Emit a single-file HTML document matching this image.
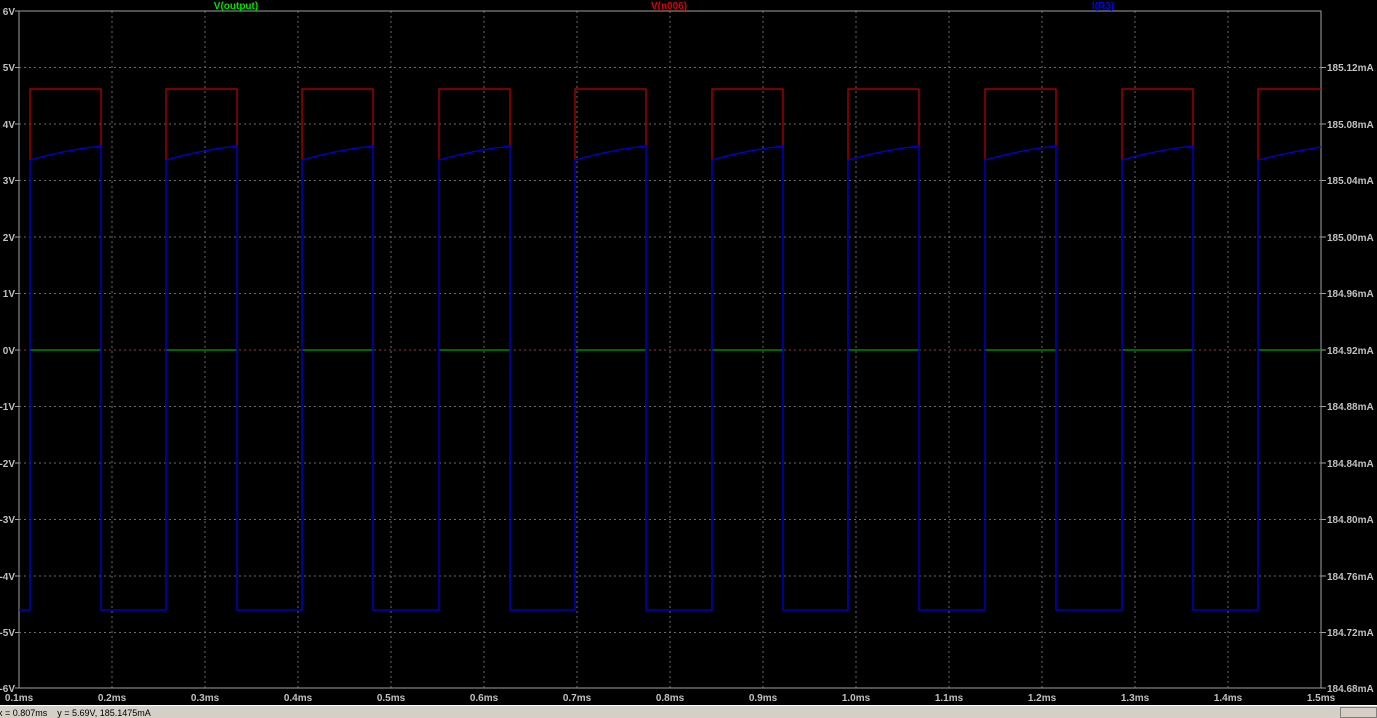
<!DOCTYPE html>
<html><head><meta charset="utf-8"><style>
html,body{margin:0;padding:0;background:#000;width:1377px;height:718px;overflow:hidden}
svg{display:block}
text{font-family:"Liberation Sans",sans-serif;font-size:10px;font-weight:bold}
</style></head><body>
<svg width="1377" height="718" xmlns="http://www.w3.org/2000/svg">
<rect width="1377" height="718" fill="#000"/>
<g stroke="#6a6a6a" stroke-width="1" stroke-dasharray="2,3" shape-rendering="crispEdges">
<line x1="112" y1="11" x2="112" y2="688"/><line x1="205" y1="11" x2="205" y2="688"/><line x1="298" y1="11" x2="298" y2="688"/><line x1="391" y1="11" x2="391" y2="688"/><line x1="484" y1="11" x2="484" y2="688"/><line x1="577" y1="11" x2="577" y2="688"/><line x1="670" y1="11" x2="670" y2="688"/><line x1="763" y1="11" x2="763" y2="688"/><line x1="856" y1="11" x2="856" y2="688"/><line x1="949" y1="11" x2="949" y2="688"/><line x1="1042" y1="11" x2="1042" y2="688"/><line x1="1135" y1="11" x2="1135" y2="688"/><line x1="1228" y1="11" x2="1228" y2="688"/>
<line x1="19" y1="67.5" x2="1321" y2="67.5"/><line x1="19" y1="124" x2="1321" y2="124"/><line x1="19" y1="180.5" x2="1321" y2="180.5"/><line x1="19" y1="237" x2="1321" y2="237"/><line x1="19" y1="293.5" x2="1321" y2="293.5"/><line x1="19" y1="350" x2="1321" y2="350" stroke="#a03030"/><line x1="19" y1="406.5" x2="1321" y2="406.5"/><line x1="19" y1="463" x2="1321" y2="463"/><line x1="19" y1="519.5" x2="1321" y2="519.5"/><line x1="19" y1="576" x2="1321" y2="576"/><line x1="19" y1="632.5" x2="1321" y2="632.5"/>
</g>
<g stroke="#a0a0a0" fill="none" shape-rendering="crispEdges">
<rect x="19" y="11" width="1302" height="677"/>
</g>
<g stroke="#00a000" stroke-width="1.3">
<line x1="30" y1="350" x2="101" y2="350"/><line x1="166" y1="350" x2="237" y2="350"/><line x1="302" y1="350" x2="373" y2="350"/><line x1="439" y1="350" x2="510" y2="350"/><line x1="575" y1="350" x2="646" y2="350"/><line x1="712" y1="350" x2="783" y2="350"/><line x1="848" y1="350" x2="919" y2="350"/><line x1="985" y1="350" x2="1056" y2="350"/><line x1="1122" y1="350" x2="1193" y2="350"/><line x1="1258" y1="350" x2="1321" y2="350"/>
</g>
<g stroke="#c00000" stroke-width="1.2" fill="none">
<path d="M30 160V89H101V146M166 160V89H237V146M302 160V89H373V146M439 160V89H510V146M575 160V89H646V146M712 160V89H783V146M848 160V89H919V146M985 160V89H1056V146M1122 160V89H1193V146M1258 160V89H1321"/>
</g>
<g stroke="#202040" stroke-width="1"><path d="M237 160V610M373 160V610M510 160V610M646 160V610M783 160V610M919 160V610M1056 160V610M1193 160V610"/></g>
<g stroke="#0000e0" stroke-width="1.3" fill="none">
<path d="M19 610H30V160Q65 150 101 146V610H166V160Q201 150 237 146V610H302V160Q337 150 373 146V610H439V160Q474 150 510 146V610H575V160Q610 150 646 146V610H712V160Q747 150 783 146V610H848V160Q883 150 919 146V610H985V160Q1020 150 1056 146V610H1122V160Q1157 150 1193 146V610H1258V160Q1290 152 1321 147"/>
</g>
<text x="236" y="9" fill="#00e000" text-anchor="middle">V(output)</text>
<text x="669" y="9" fill="#e00000" text-anchor="middle">V(n006)</text>
<text x="1103" y="9" fill="#0000ff" text-anchor="middle">I(R3)</text>
<g fill="#c0c0c0" text-anchor="end">
<text x="15" y="15">6V</text><text x="15" y="71">5V</text><text x="15" y="128">4V</text><text x="15" y="184">3V</text><text x="15" y="241">2V</text><text x="15" y="297">1V</text><text x="15" y="354">0V</text><text x="15" y="410">-1V</text><text x="15" y="467">-2V</text><text x="15" y="523">-3V</text><text x="15" y="580">-4V</text><text x="15" y="636">-5V</text><text x="15" y="692">-6V</text>
</g>
<g stroke="#a0a0a0" shape-rendering="crispEdges"><path d="M15 11H19M15 67.5H19M15 124H19M15 180.5H19M15 237H19M15 293.5H19M15 350H19M15 406.5H19M15 463H19M15 519.5H19M15 576H19M15 632.5H19M15 688H19M1321 67.5H1326M1321 124H1326M1321 180.5H1326M1321 237H1326M1321 293.5H1326M1321 350H1326M1321 406.5H1326M1321 463H1326M1321 519.5H1326M1321 576H1326M1321 632.5H1326M1321 688H1326"/></g>
<g fill="#c0c0c0">
<text x="1327" y="71">185.12mA</text><text x="1327" y="128">185.08mA</text><text x="1327" y="184">185.04mA</text><text x="1327" y="241">185.00mA</text><text x="1327" y="297">184.96mA</text><text x="1327" y="354">184.92mA</text><text x="1327" y="410">184.88mA</text><text x="1327" y="467">184.84mA</text><text x="1327" y="523">184.80mA</text><text x="1327" y="580">184.76mA</text><text x="1327" y="636">184.72mA</text><text x="1327" y="692">184.68mA</text>
</g>
<g fill="#c0c0c0" text-anchor="middle">
<text x="19" y="701">0.1ms</text><text x="112" y="701">0.2ms</text><text x="205" y="701">0.3ms</text><text x="298" y="701">0.4ms</text><text x="391" y="701">0.5ms</text><text x="484" y="701">0.6ms</text><text x="577" y="701">0.7ms</text><text x="670" y="701">0.8ms</text><text x="763" y="701">0.9ms</text><text x="856" y="701">1.0ms</text><text x="949" y="701">1.1ms</text><text x="1042" y="701">1.2ms</text><text x="1135" y="701">1.3ms</text><text x="1228" y="701">1.4ms</text><text x="1321" y="701">1.5ms</text>
</g>
<rect x="0" y="705" width="1377" height="13" fill="#d4d0c8"/>
<line x1="0" y1="705.5" x2="1377" y2="705.5" stroke="#ffffff"/>
<rect x="1340.5" y="707.5" width="36" height="10" fill="none" stroke="#808080"/>
<text x="-2" y="716" fill="#000" style="font-weight:normal;font-size:9px" xml:space="preserve">x = 0.807ms    y = 5.69V, 185.1475mA</text>
</svg>
</body></html>
